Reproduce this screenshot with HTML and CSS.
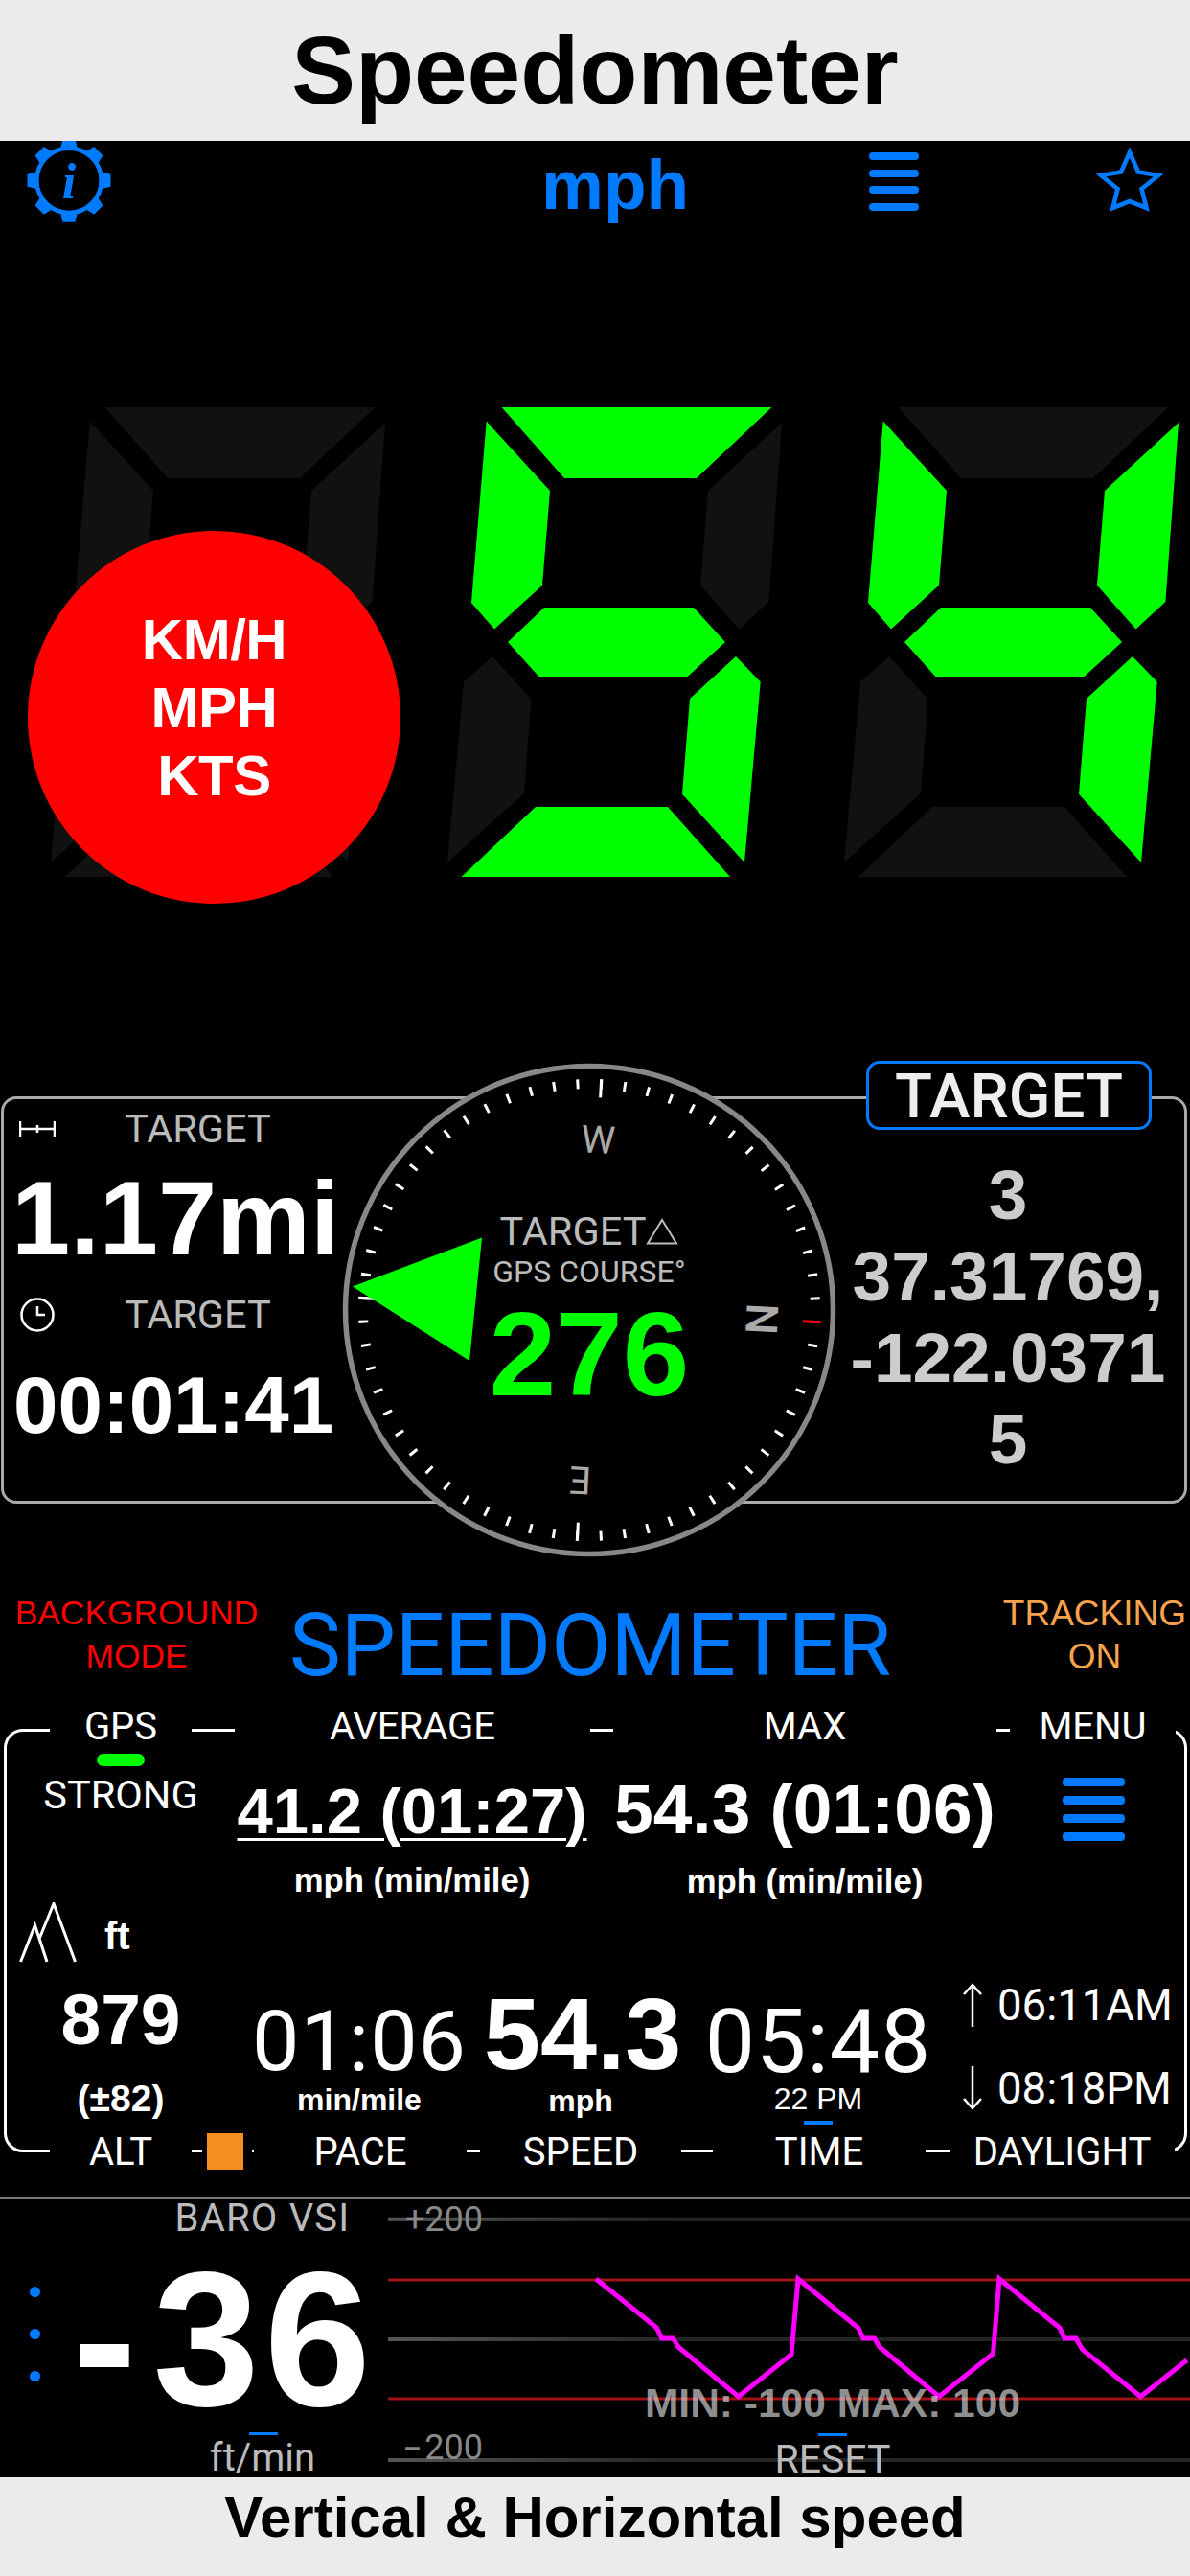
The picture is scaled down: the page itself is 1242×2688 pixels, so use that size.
FILE: index.html
```html
<!DOCTYPE html>
<html lang="en">
<head>
    <meta charset="UTF-8">
    <title>Speedometer</title>
    <link rel="stylesheet" href="styles.css">
</head>
<body>
    <div class="app">
        <header class="title-band">Speedometer</header>

        <nav class="nav">
            <svg class="gear" width="88" height="88" viewBox="0 0 88 88">
                <defs>
                    <polygon id="gear-tooth" points="-9,-33 -6.5,-43.5 6.5,-43.5 9,-33"/>
                </defs>
                <g transform="translate(44 41.3)">
                    <use href="#gear-tooth"/>
                    <use href="#gear-tooth" transform="rotate(45)"/>
                    <use href="#gear-tooth" transform="rotate(90)"/>
                    <use href="#gear-tooth" transform="rotate(135)"/>
                    <use href="#gear-tooth" transform="rotate(180)"/>
                    <use href="#gear-tooth" transform="rotate(225)"/>
                    <use href="#gear-tooth" transform="rotate(270)"/>
                    <use href="#gear-tooth" transform="rotate(315)"/>
                    <circle class="gear-ring" r="33.7"/>
                </g>
                <text class="gear-i" x="44" y="60">i</text>
            </svg>
            <div class="nav-unit">mph</div>
            <div class="burger nav-burger"><i></i><i></i><i></i><i></i></div>
            <svg class="star" width="80" height="78" viewBox="0 0 80 78">
                <polygon points="40,9 49,29.5 70,33 52.5,47 57.5,67 40,60 22.5,67 27.5,47 10,33 31,29.5"/>
            </svg>
        </nav>

        <section class="speed">
            <svg class="digits" width="1242" height="540" viewBox="0 420 1242 540">
                <defs>
                    <polygon id="seg-a" points="523.6,425 805.5,425 727,499 589,499"/>
                    <polygon id="seg-b" points="816,441 739,512 731,610.7 771.5,656.5 802.4,628"/>
                    <polygon id="seg-c" points="768,685 793.7,711.6 777,900 712,828.7 720,729"/>
                    <polygon id="seg-d" points="559,842 697,842 762,915 481.6,915"/>
                    <polygon id="seg-e" points="514,685 554.5,729.5 547,828 467,900 484,711.6"/>
                    <polygon id="seg-f" points="507.7,439.6 574,512 566,610.7 516,656.5 492,629"/>
                    <polygon id="seg-g" points="568,634 724,634 757,670 717.6,706 562.4,706 530,670"/>
                </defs>
                <g transform="translate(-414 0)" class="off">
                    <use href="#seg-a"/><use href="#seg-b"/><use href="#seg-c"/><use href="#seg-d"/><use href="#seg-e"/><use href="#seg-f"/><use href="#seg-g"/>
                </g>
                <g class="off">
                    <use href="#seg-a" class="on"/><use href="#seg-b"/><use href="#seg-c" class="on"/><use href="#seg-d" class="on"/><use href="#seg-e"/><use href="#seg-f" class="on"/><use href="#seg-g" class="on"/>
                </g>
                <g transform="translate(414 0)" class="off">
                    <use href="#seg-a"/><use href="#seg-b" class="on"/><use href="#seg-c" class="on"/><use href="#seg-d"/><use href="#seg-e"/><use href="#seg-f" class="on"/><use href="#seg-g" class="on"/>
                </g>
            </svg>
            <div class="unit-menu">
                <div>KM/H</div>
                <div>MPH</div>
                <div>KTS</div>
            </div>
        </section>

        <section class="target">
            <div class="target-left">
                <div class="target-head">
                    <svg class="icon-distance" width="38" height="16" viewBox="0 0 38 16">
                        <path d="M1 0V16M19 4V12M37 0V16M1 8H37"/>
                    </svg>
                    <span class="thin-label">TARGET</span>
                </div>
                <div class="target-distance">1.17mi</div>
                <div class="target-head target-head-time">
                    <svg class="icon-clock" width="38" height="38" viewBox="0 0 38 38">
                        <circle cx="19" cy="19" r="16.5"/>
                        <path d="M19 10V19H27"/>
                    </svg>
                    <span class="thin-label">TARGET</span>
                </div>
                <div class="target-time">00:01:41</div>
            </div>
            <div class="target-coords">
                <div>3</div>
                <div>37.31769,</div>
                <div>-122.0371</div>
                <div>5</div>
            </div>
            <div class="target-badge">TARGET</div>

            <div class="compass">
                <svg width="520" height="520" viewBox="0 0 520 520">
                    <circle class="compass-ring" cx="260" cy="260" r="254.5"/>
                    <circle class="compass-ticks" cx="260" cy="260" r="236" transform="rotate(3 260 260)"/>
                    <g transform="rotate(3 260 260)">
                        <path class="compass-major" d="M260 19V38M260 482V501M19 260H38"/>
                        <path class="compass-north" d="M483 260H502"/>
                    </g>
                    <text class="compass-letter" x="260" y="96" transform="rotate(3 260 260)">W</text>
                    <text class="compass-letter" x="260" y="96" transform="rotate(183 260 260)">E</text>
                    <text class="compass-letter compass-n" x="260" y="96" transform="rotate(93 260 260)">N</text>
                    <polygon class="compass-pointer" points="13,235.4 148,184.4 135,313"/>
                </svg>
                <div class="compass-readout">
                    <div class="compass-target">
                        <span>TARGET</span>
                        <svg width="34" height="28" viewBox="0 0 34 28"><polygon points="17,2 32,26.5 2,26.5"/></svg>
                    </div>
                    <div class="compass-course">GPS COURSE°</div>
                    <div class="compass-value">276</div>
                </div>
            </div>
        </section>

        <section class="modes">
            <div class="mode-note mode-bg">BACKGROUND<br>MODE</div>
            <div class="mode-title">SPEEDOMETER</div>
            <div class="mode-note mode-track">TRACKING<br>ON</div>
        </section>

        <section class="data">
            <div class="rail rail-top">
                <span class="rail-gps">GPS</span>
                <span class="rail-avg">AVERAGE</span>
                <span class="rail-max">MAX</span>
                <span class="rail-menu">MENU</span>
            </div>

            <div class="data-row-a">
                <div class="gps">
                    <div class="gps-pill"></div>
                    <div class="gps-text">STRONG</div>
                </div>
                <div class="stat stat-avg">
                    <div class="stat-value"><u>41.2 (01:27)</u></div>
                    <div class="stat-unit">mph (min/mile)</div>
                </div>
                <div class="stat stat-max">
                    <div class="stat-value">54.3 (01:06)</div>
                    <div class="stat-unit">mph (min/mile)</div>
                </div>
                <div class="burger menu-burger"><i></i><i></i><i></i><i></i></div>
            </div>

            <div class="data-row-b">
                <div class="alt">
                    <div class="alt-head">
                        <svg width="60" height="64" viewBox="0 0 60 64">
                            <path d="M1.5 62L16.5 24L29 62M21.5 37L36 1.5L58.5 62"/>
                        </svg>
                        <span>ft</span>
                    </div>
                    <div class="alt-value">879</div>
                    <div class="alt-error">(±82)</div>
                </div>
                <div class="cell cell-pace">
                    <div class="cell-light">01:06</div>
                    <div class="cell-unit">min/mile</div>
                </div>
                <div class="cell cell-speed">
                    <div class="cell-bold">54.3</div>
                    <div class="cell-unit">mph</div>
                </div>
                <div class="cell cell-time">
                    <div class="cell-light">05:48</div>
                    <div class="cell-ampm">22 PM</div>
                    <div class="blue-bar"></div>
                </div>
                <div class="daylight">
                    <div class="daylight-row">
                        <svg width="22" height="46" viewBox="0 0 22 46"><path d="M11 46V2M2 12L11 2L20 12"/></svg>
                        <span>06:11AM</span>
                    </div>
                    <div class="daylight-row">
                        <svg width="22" height="46" viewBox="0 0 22 46"><path d="M11 0V44M2 34L11 44L20 34"/></svg>
                        <span>08:18PM</span>
                    </div>
                </div>
            </div>

            <div class="rail rail-bottom">
                <span class="rail-alt">ALT</span>
                <span class="rail-swatch"><i></i></span>
                <span class="rail-pace">PACE</span>
                <span class="rail-speed">SPEED</span>
                <span class="rail-time">TIME</span>
                <span class="rail-daylight">DAYLIGHT</span>
            </div>
        </section>

        <section class="vsi">
            <div class="vsi-left">
                <div class="vsi-label">BARO VSI</div>
                <div class="vsi-main">
                    <div class="vsi-dots"><i></i><i></i><i></i></div>
                    <div class="vsi-value"><span>-</span>36</div>
                </div>
                <div class="blue-bar vsi-bar"></div>
                <div class="vsi-label vsi-unit">ft/min</div>
            </div>
            <div class="chart">
                <svg width="837" height="290" viewBox="0 0 837 290">
                    <defs>
                        <linearGradient id="grid-fade" gradientUnits="userSpaceOnUse" x1="0" y1="0" x2="300" y2="0">
                            <stop offset="0" stop-color="#555"/>
                            <stop offset="1" stop-color="#242424"/>
                        </linearGradient>
                    </defs>
                    <path class="chart-grid" d="M0 20.7H837M0 146H837M0 272H837"/>
                    <path class="chart-limit" d="M0 84H837M0 208H837"/>
                    <polyline class="chart-line" points="217,83 280.5,134 285.6,145 297.5,145 303,154 365.7,205.7 421,161.7 428,83 490.7,134 496,145 507.7,145 513,154 575,205.7 631.5,161 638,83 701,134 706,145 718,145 724.7,156.7 785.4,205.7 833.8,167.7"/>
                </svg>
                <div class="chart-tick chart-tick-top">+200</div>
                <div class="chart-tick chart-tick-bottom"><span>-</span>200</div>
                <div class="chart-overlay">
                    <div class="chart-range">MIN: -100 MAX: 100</div>
                    <div class="blue-bar"></div>
                    <div class="chart-reset">RESET</div>
                </div>
            </div>
        </section>

        <footer class="caption-band">Vertical &amp; Horizontal speed</footer>
    </div>
</body>
</html>
```

FILE: styles.css
```css
* {
    box-sizing: border-box;
}

body {
    margin: 0;
    background: #000;
    font-family: "Liberation Sans", Arial, sans-serif;
    color: #fff;
}

svg {
    display: block;
}

.app {
    width: 1242px;
    height: 2688px;
    display: flex;
    flex-direction: column;
    overflow: hidden;
    background: #000;
}

/* grey bands */
.title-band {
    height: 147px;
    flex: none;
    display: flex;
    align-items: center;
    justify-content: center;
    background: #ebebeb;
    color: #000;
    font-size: 100px;
    font-weight: 700;
}

.caption-band {
    height: 103px;
    flex: none;
    position: relative;
    padding-top: 12px;
    text-align: center;
    background: #ebebeb;
    color: #000;
    font-size: 60px;
    line-height: 60px;
    font-weight: 700;
}

/* nav */
.nav {
    height: 273px;
    flex: none;
    display: flex;
    align-items: flex-start;
    color: #007aff;
}

.gear {
    margin-left: 28px;
    fill: #007aff;
}

.gear-ring {
    fill: none;
    stroke: #007aff;
    stroke-width: 4.6;
}

.gear-i {
    fill: #007aff;
    font-family: "Liberation Serif", serif;
    font-style: italic;
    font-weight: 700;
    font-size: 52px;
    text-anchor: middle;
}

.nav-unit {
    width: 152px;
    margin: 9px 0 0 449px;
    font-size: 73px;
    line-height: 73px;
    font-weight: 700;
    text-align: center;
}

.burger {
    display: flex;
    flex-direction: column;
}

.burger i {
    display: block;
    background: #007aff;
    border-radius: 4px;
}

.nav-burger {
    width: 52px;
    margin: 12px 0 0 190px;
    gap: 9.5px;
}

.nav-burger i {
    height: 8px;
}

.star {
    margin: 3px 0 0 180px;
}

.star polygon {
    fill: none;
    stroke: #007aff;
    stroke-width: 4.6;
    stroke-miterlimit: 8;
}

/* speed digits */
.speed {
    height: 724px;
    flex: none;
    position: relative;
}

.digits .off {
    fill: #111;
}

.digits .on {
    fill: #0f0;
}

.unit-menu {
    position: absolute;
    left: 29px;
    top: 134px;
    width: 389px;
    height: 389px;
    padding-bottom: 20px;
    border-radius: 50%;
    background: #f00;
    display: flex;
    flex-direction: column;
    align-items: center;
    justify-content: center;
    font-size: 60px;
    line-height: 71px;
    font-weight: 700;
    letter-spacing: -0.5px;
}

/* target panel */
.target {
    height: 425px;
    flex: none;
    position: relative;
    margin: 0 3px 0 1px;
    border: 3px solid #aaa;
    border-radius: 16px;
    display: flex;
    justify-content: space-between;
}

.target-left {
    padding-top: 10px;
}

.target-head {
    display: flex;
    align-items: center;
    height: 41px;
    padding-left: 16px;
}

.thin-label {
    margin-left: 72px;
    font-family: Roboto, sans-serif;
    font-size: 41.5px;
    line-height: 41px;
    color: #bbb;
}

.icon-distance path,
.icon-clock circle,
.icon-clock path {
    fill: none;
    stroke: #fff;
    stroke-width: 2.5;
}

.target-distance {
    margin: 18px 0 0 8px;
    font-size: 110px;
    line-height: 110px;
    font-weight: 700;
}

.target-head-time {
    margin-top: 25px;
}

.target-time {
    margin: 32px 0 0 10px;
    font-size: 83.5px;
    line-height: 84px;
    font-weight: 700;
}

.target-coords {
    width: 340px;
    margin-right: 14px;
    padding-top: 57px;
    text-align: center;
    font-size: 73px;
    line-height: 85px;
    font-weight: 700;
    color: #ccc;
}

.target-badge {
    position: absolute;
    left: 900px;
    top: -40px;
    width: 298px;
    height: 72px;
    padding-top: 3px;
    border: 3px solid #007aff;
    border-radius: 14px;
    background: #000;
    color: #eee;
    text-align: center;
    font-family: Roboto, sans-serif;
    font-size: 64px;
    line-height: 64px;
    font-weight: 500;
}

/* compass */
.compass {
    position: absolute;
    left: 351px;
    top: -40px;
    width: 520px;
    height: 520px;
}

.compass-ring {
    fill: #000;
    stroke: #888;
    stroke-width: 5.5;
}

.compass-ticks {
    fill: none;
    stroke: #fff;
    stroke-width: 10;
    stroke-dasharray: 3 21.71;
    stroke-dashoffset: 1.5;
}

.compass-major {
    fill: none;
    stroke: #fff;
    stroke-width: 3;
}

.compass-north {
    fill: none;
    stroke: #e00;
    stroke-width: 3;
}

.compass-letter {
    fill: #aaa;
    font-family: Roboto, sans-serif;
    font-size: 40px;
    text-anchor: middle;
}

.compass-n {
    font-weight: 500;
    font-size: 46px;
}

.compass-pointer {
    fill: #0f0;
}

.compass-readout {
    position: absolute;
    left: 0;
    top: 157px;
    width: 520px;
    display: flex;
    flex-direction: column;
    align-items: center;
}

.compass-target {
    display: flex;
    align-items: center;
    font-family: Roboto, sans-serif;
    font-size: 41.5px;
    line-height: 41px;
    color: #bbb;
}

.compass-target polygon {
    fill: none;
    stroke: #bbb;
    stroke-width: 2;
}

.compass-course {
    margin-top: 6px;
    font-family: Roboto, sans-serif;
    font-size: 32px;
    line-height: 32px;
    color: #bbb;
}

.compass-value {
    margin-top: 7px;
    font-size: 125px;
    line-height: 125px;
    font-weight: 700;
    color: #0f0;
}

/* background / tracking row */
.modes {
    height: 235px;
    flex: none;
    display: grid;
    grid-template-columns: 285px 662px 1fr;
    align-items: start;
    padding-top: 92px;
}

.mode-note {
    font-size: 35.4px;
    line-height: 45px;
    text-align: center;
}

.mode-bg {
    color: #f00;
}

.mode-track {
    justify-self: end;
    margin-right: 4px;
    font-size: 37px;
    color: #f7a24c;
}

.mode-title {
    margin-top: 11px;
    text-align: center;
    font-family: Roboto, sans-serif;
    font-size: 90.5px;
    line-height: 90px;
    color: #007aff;
}

/* data panel */
.data {
    flex: none;
    margin: 0 3px 0 4px;
    border: 3px solid #fff;
    border-radius: 20px;
}

.rail {
    display: flex;
    font-family: Roboto, sans-serif;
    font-size: 40px;
    line-height: 40px;
    height: 40px;
}

.rail span {
    display: block;
    flex: none;
    text-align: center;
    background: #000;
}

.rail-top {
    margin-top: -25px;
    padding-left: 45px;
}

.rail-gps { width: 148px; }
.rail-avg { width: 371px; margin-left: 45px; }
.rail-max { width: 400px; margin-left: 24px; }
.rail-menu { width: 173px; margin-left: 14px; }

.rail-bottom {
    margin-bottom: -23px;
    padding-left: 45px;
}

.rail-alt { width: 148px; }
.rail-swatch { width: 52px; margin-left: 11px; padding-left: 5px; }
.rail-swatch i {
    display: block;
    width: 38px;
    height: 38px;
    background: #f58e21;
}
.rail-pace { width: 222px; margin-left: 2px; }
.rail-speed { width: 210px; margin-left: 14px; }
.rail-time { width: 222px; margin-left: 33px; }
.rail-daylight { width: 235px; margin-left: 25px; }

.data-row-a {
    height: 163px;
    display: grid;
    grid-template-columns: 238px 370px 450px 1fr;
    text-align: center;
}

.gps-pill {
    width: 50px;
    height: 13px;
    margin: 8px auto 0;
    border-radius: 7px;
    background: #0f0;
}

.gps-text {
    margin-top: 9px;
    font-family: Roboto, sans-serif;
    font-size: 41.5px;
    line-height: 41px;
}

.stat-avg {
    padding-top: 34px;
}

.stat-max {
    padding-top: 29px;
}

.stat-avg .stat-value {
    font-size: 67px;
    line-height: 67px;
}

.stat-max .stat-value {
    font-size: 73px;
    line-height: 73px;
}

.stat-value {
    font-weight: 700;
}

.stat-value u {
    text-decoration-thickness: 3px;
    text-underline-offset: 5px;
}

.stat-unit {
    margin-top: 22px;
    font-size: 34.7px;
    line-height: 34.4px;
    font-weight: 700;
}

.menu-burger {
    width: 65px;
    margin: 33px 0 0 44px;
    gap: 10px;
}

.menu-burger i {
    height: 9px;
}

.data-row-b {
    height: 241px;
    display: grid;
    grid-template-columns: 238px 260px 202px 294px 1fr;
    text-align: center;
}

.alt-head {
    display: flex;
    align-items: flex-start;
    height: 85px;
    padding-left: 13px;
}

.alt-head svg path,
.daylight svg path {
    fill: none;
    stroke: #fff;
    stroke-width: 3;
}

.alt-head span {
    margin: 15px 0 0 29px;
    font-size: 40px;
    line-height: 40px;
    font-weight: 700;
}

.alt-value {
    font-size: 75px;
    line-height: 74px;
    font-weight: 700;
}

.alt-error {
    margin-top: 26px;
    font-size: 39px;
    line-height: 39px;
    font-weight: 700;
}

.cell-light {
    font-family: Roboto, sans-serif;
    letter-spacing: 1px;
}

.cell-pace {
    padding-top: 102px;
}

.cell-pace .cell-light {
    font-size: 88px;
    line-height: 86px;
}

.cell-pace .cell-unit {
    margin-top: 3px;
}

.cell-speed {
    padding-top: 85px;
}

.cell-bold {
    font-size: 106px;
    line-height: 105px;
    font-weight: 700;
}

.cell-speed .cell-unit {
    margin-top: 2px;
}

.cell-unit {
    font-size: 32px;
    line-height: 31.5px;
    font-weight: 700;
}

.cell-time {
    padding-top: 100px;
}

.cell-time .cell-light {
    font-size: 93px;
    line-height: 91px;
}

.cell-ampm {
    margin-top: -1px;
    font-size: 32px;
    line-height: 31px;
}

.blue-bar {
    width: 30px;
    height: 4px;
    margin: 7px auto 0;
    background: #007aff;
}

.daylight {
    padding: 84px 0 0 3px;
    display: flex;
    flex-direction: column;
    gap: 40px;
}

.daylight-row {
    display: flex;
    align-items: flex-start;
    gap: 15px;
    font-family: Roboto, sans-serif;
    font-size: 45.5px;
    line-height: 47px;
}

.daylight svg path {
    stroke-width: 2.5;
}

/* vertical speed */
.vsi {
    height: 293px;
    flex: none;
    margin-top: 46px;
    border-top: 3px solid #777;
    display: grid;
    grid-template-columns: 405px 1fr;
    overflow: hidden;
}

.vsi-label {
    padding-left: 143px;
    text-align: center;
    font-family: Roboto, sans-serif;
    font-size: 40px;
    line-height: 39px;
    letter-spacing: 1.2px;
    color: #bbb;
}

.vsi-main {
    height: 204px;
    display: flex;
    align-items: flex-start;
    padding-left: 31px;
}

.vsi-dots {
    width: 11px;
    margin-top: 52px;
    display: flex;
    flex-direction: column;
    gap: 33px;
}

.vsi-dots i {
    display: block;
    width: 11px;
    height: 11px;
    border-radius: 50%;
    background: #007aff;
}

.vsi-value {
    margin: 7px 0 0 34px;
    font-size: 200px;
    line-height: 200px;
    font-weight: 700;
    letter-spacing: 5px;
    white-space: nowrap;
}

.vsi-value span {
    margin-right: 12px;
}

.vsi-bar {
    width: 30px;
    height: 3px;
    margin: 0 0 0 260px;
}

.vsi-unit {
    margin-top: 4px;
    font-size: 40px;
    line-height: 40px;
    letter-spacing: 0;
}

.chart {
    position: relative;
}

.chart-grid {
    fill: none;
    stroke: url(#grid-fade);
    stroke-width: 4;
}

.chart-limit {
    fill: none;
    stroke: #a01414;
    stroke-width: 3;
}

.chart-line {
    fill: none;
    stroke: #f0f;
    stroke-width: 5;
}

.chart-tick {
    position: absolute;
    left: 14px;
    width: 85px;
    text-align: right;
    font-family: Roboto, sans-serif;
    font-size: 36px;
    line-height: 36px;
    color: #888;
}

.chart-tick span {
    display: inline-block;
    margin-right: 4px;
    transform: scaleX(1.7);
    transform-origin: right;
}

.chart-tick-top {
    top: 3px;
}

.chart-tick-bottom {
    top: 241px;
}

.chart-overlay {
    position: absolute;
    left: 64px;
    top: 192px;
    width: 800px;
    display: flex;
    flex-direction: column;
    align-items: center;
}

.chart-range {
    font-size: 42.5px;
    line-height: 42.5px;
    font-weight: 700;
    color: rgba(200, 200, 200, 0.72);
}

.chart-overlay .blue-bar {
    height: 3px;
    margin-top: 9px;
}

.chart-reset {
    margin-top: 4px;
    font-family: Roboto, sans-serif;
    font-size: 41px;
    line-height: 41px;
    color: #bbb;
}
```
